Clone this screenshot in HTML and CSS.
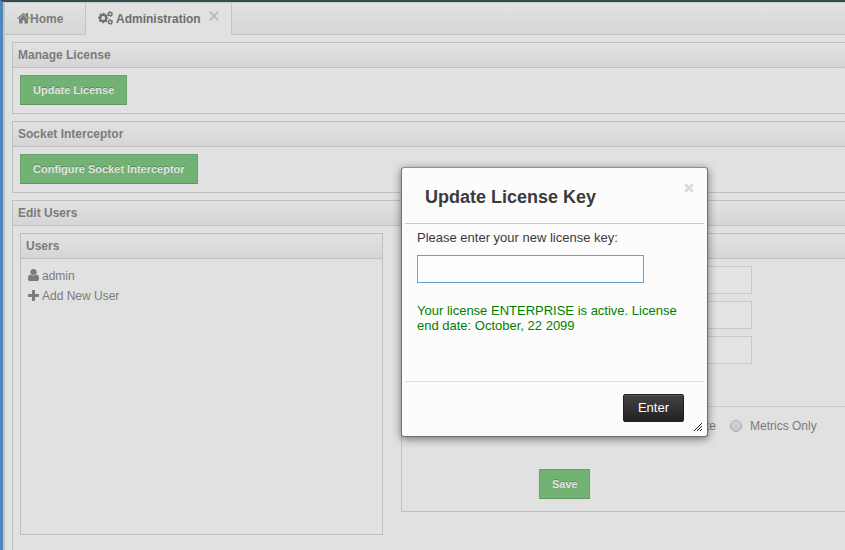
FILE: index.html
```html
<!DOCTYPE html>
<html lang="en">
<head>
<meta charset="utf-8">
<title>Administration</title>
<link rel="stylesheet" href="styles.css">
</head>
<body>
<div class="app">
  <nav class="tabs">
    <div class="tab home">
      <svg class="icon-home" viewBox="0 128 1664 1480" preserveAspectRatio="none"><path d="M1408 992v480q0 26-19 45t-45 19h-384v-384h-256v384h-384q-26 0-45-19t-19-45v-480q0-1 .5-3t.5-3l575-474 575 474q1 2 1 6zm223-69l-62 74q-8 9-21 11h-3q-13 0-21-7l-692-577-692 577q-12 8-24 7-13-2-21-11l-62-74q-8-10-7-23.5t11-21.5l719-599q32-26 76-26t76 26l244 204v-195q0-14 9-23t23-9h192q14 0 23 9t9 23v408l219 182q10 8 11 21.5t-7 23.5z"/></svg><span>Home</span>
    </div>
    <div class="tab active">
      <svg class="icon-cogs" viewBox="0 0 15 14">
        <g fill="none" stroke="currentColor">
          <circle cx="5.2" cy="7" r="3.1" stroke-width="2.2"/>
          <circle cx="5.2" cy="7" r="4.5" stroke-width="1.4" stroke-dasharray="1.767 1.767" stroke-dashoffset=".88"/>
          <circle cx="12.2" cy="3" r="1.7" stroke-width="1.3"/>
          <circle cx="12.2" cy="3" r="2.500" stroke-width="1" stroke-dasharray="1.309 1.309"/>
          <circle cx="12.2" cy="11" r="1.7" stroke-width="1.3"/>
          <circle cx="12.2" cy="11" r="2.500" stroke-width="1" stroke-dasharray="1.309 1.309"/>
        </g>
      </svg>
      <span>Administration</span>
      <svg class="icon-close" viewBox="0 0 10 10"><path d="M.8.8l8.400 8.400M9.200.8l-8.400 8.400"/></svg>
    </div>
    <div class="tab rest"></div>
  </nav>
  <main>
    <section class="panel short">
      <h2>Manage License</h2>
      <div class="body"><button class="green">Update License</button></div>
    </section>
    <section class="panel short">
      <h2>Socket Interceptor</h2>
      <div class="body"><button class="green">Configure Socket Interceptor</button></div>
    </section>
    <section class="panel tall">
      <h2>Edit Users</h2>
      <div class="columns">
        <section class="panel users">
          <h2>Users</h2>
          <ul>
            <li><svg viewBox="256 128 1280 1536" preserveAspectRatio="none"><path d="M1536 1399q0 109-62.500 187t-150.500 78h-854q-88 0-150.500-78t-62.500-187q0-85 8.500-160.500t31.500-152 58.500-131 94-89 134.500-34.500q131 128 313 128t313-128q76 0 134.500 34.500t94 89 58.500 131 31.500 152 8.500 160.500zm-256-887q0 159-112.500 271.500t-271.500 112.500-271.500-112.500-112.500-271.500 112.500-271.500 271.500-112.500 271.500 112.500 112.500 271.500z"/></svg><span>admin</span></li>
            <li><svg class="plus" viewBox="192 128 1408 1408"><path d="M1600 736v192q0 40-28 68t-68 28h-416v416q0 40-28 68t-68 28h-192q-40 0-68-28t-28-68v-416h-416q-40 0-68-28t-28-68v-192q0-40 28-68t68-28h416v-416q0-40 28-68t68-28h192q40 0 68 28t28 68v416h416q40 0 68 28t28 68z"/></svg><span>Add New User</span></li>
          </ul>
        </section>
        <section class="panel details">
          <h2></h2>
          <div class="fields"><input><input><input></div>
          <div class="roles"><span class="cut">te</span><i class="radio"></i><span>Metrics Only</span></div>
          <button class="green save">Save</button>
        </section>
      </div>
    </section>
  </main>
</div>
<div class="dialog">
  <header><h1>Update License Key</h1>
    <svg viewBox="0 0 10 10"><path d="M1.200 1.200l7.600 7.600M8.800 1.200l-7.600 7.600"/></svg>
  </header>
  <div class="content">
    <label>Please enter your new license key:</label>
    <input class="key">
    <p>Your license ENTERPRISE is active. License end date: October, 22 2099</p>
  </div>
  <footer><button class="enter">Enter</button></footer>
  <svg class="grip" viewBox="0 0 8 8"><path d="M0 8L8 0M3 8l5-5M6 8l2-2"/></svg>
</div>
</body>
</html>
```
FILE: styles.css
```css
* { box-sizing: border-box; }
body {
  margin: 0;
  width: 845px;
  height: 550px;
  overflow: hidden;
  position: relative;
  background: #e1e1e1;
  font: 12px/20px "Liberation Sans", Arial, sans-serif;
  color: #7b7b7b;
}
svg { display: block; fill: currentColor; flex: none; }
button, input { font-family: inherit; margin: 0; }
h1, h2, p, ul { margin: 0; padding: 0; }

.app {
  height: 550px;
  border-top: 2px solid #344b50;
  border-left: 3px solid #4f88b8;
  overflow: hidden;
}
.tabs {
  display: flex;
  height: 33px;
  border-top: 1px solid #c8c8c8;
  border-left: 2px solid #c3c3c3;
  font-weight: bold;
}
.tab {
  display: flex;
  align-items: center;
  height: 32px;
  border-right: 1px solid #c3c3c3;
  border-bottom: 1px solid #c3c3c3;
  background: linear-gradient(#e2e2e2, #d6d6d6);
}
.home { width: 81px; padding-left: 12px; }
.active {
  width: 146px;
  padding-left: 12px;
  background: #e1e1e1;
  border-bottom-color: #e1e1e1;
  color: #6e6e6e;
}
.tab.rest { flex: 1; border-right: 0; }
.icon-home { width: 13px; height: 12px; margin-bottom: 1px; }
.icon-cogs { width: 15px; height: 14px; margin: 0 3px 1px 0; }
.icon-close {
  width: 10px;
  height: 10px;
  margin: 0 0 6px 8px;
  fill: none;
  stroke: #bdbdbd;
  stroke-width: 2;
}
main {
  width: 900px;
  height: 520px;
  padding: 7px 0 0 7px;
  border-left: 2px solid #c3c3c3;
}
.panel { border: 1px solid #c0c0c0; }
.panel h2 {
  height: 25px;
  padding-left: 5px;
  border-bottom: 1px solid #c0c0c0;
  background: linear-gradient(#e2e2e2, #d5d5d5);
  font-size: 12px;
  line-height: 25px;
}
.short { height: 72px; margin-bottom: 7px; }
.tall { height: 380px; }
.body { padding: 7px; }
.green {
  display: block;
  height: 30px;
  padding: 0 12px;
  border: 1px solid #68a46a;
  border-bottom-color: #5f9561;
  background: #72b274;
  color: #e3e3e3;
  font-size: 11px;
  font-weight: bold;
  text-shadow: 0 -1px 0 rgba(0, 0, 0, .25);
}
.columns { display: flex; gap: 18px; padding: 7px; }
.users { width: 363px; height: 302px; }
.users ul { list-style: none; padding: 7px; }
.users li { display: flex; align-items: center; height: 20px; gap: 3px; }
.users li svg { width: 11px; height: 12px; margin-bottom: 2px; }
.users li .plus { height: 11px; }
.details { width: 470px; height: 279px; }
.fields {
  display: flex;
  flex-direction: column;
  gap: 7px;
  height: 148px;
  padding: 7px 0 0 123px;
  border-bottom: 1px solid #cbcbcb;
}
.fields input {
  width: 227px;
  height: 28px;
  border: 1px solid #c8c8c8;
  background: #e3e3e3;
}
.roles { display: flex; align-items: center; height: 20px; margin-top: 9px; padding-left: 304px; }
.cut { width: 10px; }
.radio {
  width: 12px;
  height: 12px;
  margin: 0 8px 0 14px;
  border: 1px solid #aaa;
  border-radius: 50%;
  background: linear-gradient(#d4d4d4, #c6c6c6);
}
.save { width: 51px; margin: 33px 0 0 137px; }

.dialog {
  position: absolute;
  left: 401px;
  top: 167px;
  width: 307px;
  height: 270px;
  padding: 3px;
  border: 1px solid #707070;
  border-top-color: #8d8d8d;
  border-radius: 3px;
  background: #fcfcfc;
  color: #3b3b3b;
  font-size: 13px;
  box-shadow: 0 2px 8px rgba(0, 0, 0, .5);
}
.dialog header {
  display: flex;
  justify-content: space-between;
  height: 53px;
  padding: 12px 10px 0 20px;
  border-bottom: 1px solid #c9c9c9;
}
h1 { font-size: 18px; line-height: 28px; }
.dialog header svg {
  width: 10px;
  height: 10px;
  fill: none;
  stroke: #dcdcdc;
  stroke-width: 3;
}
.content { height: 158px; padding: 4px 12px 0; border-bottom: 1px solid #ddd; }
.content label { display: block; }
.key {
  display: block;
  width: 227px;
  height: 28px;
  padding: 0;
  margin: 7px 0 20px;
  border: 1px solid #64a4cc;
  background: #fdfdfd;
}
.content p { color: #008000; line-height: 15px; }
.dialog footer { display: flex; justify-content: flex-end; padding: 12px 20px 0; }
.enter {
  width: 61px;
  height: 28px;
  padding: 0 0 2px;
  border: 1px solid #202020;
  border-radius: 2px;
  background: linear-gradient(#434343, #212121);
  box-shadow: inset 0 1px 0 #555;
  color: #fff;
  font-size: 13px;
}
.grip {
  position: absolute;
  right: 5px;
  bottom: 5px;
  width: 8px;
  height: 8px;
  fill: none;
  stroke: #222;
  stroke-width: 1;
}
```
